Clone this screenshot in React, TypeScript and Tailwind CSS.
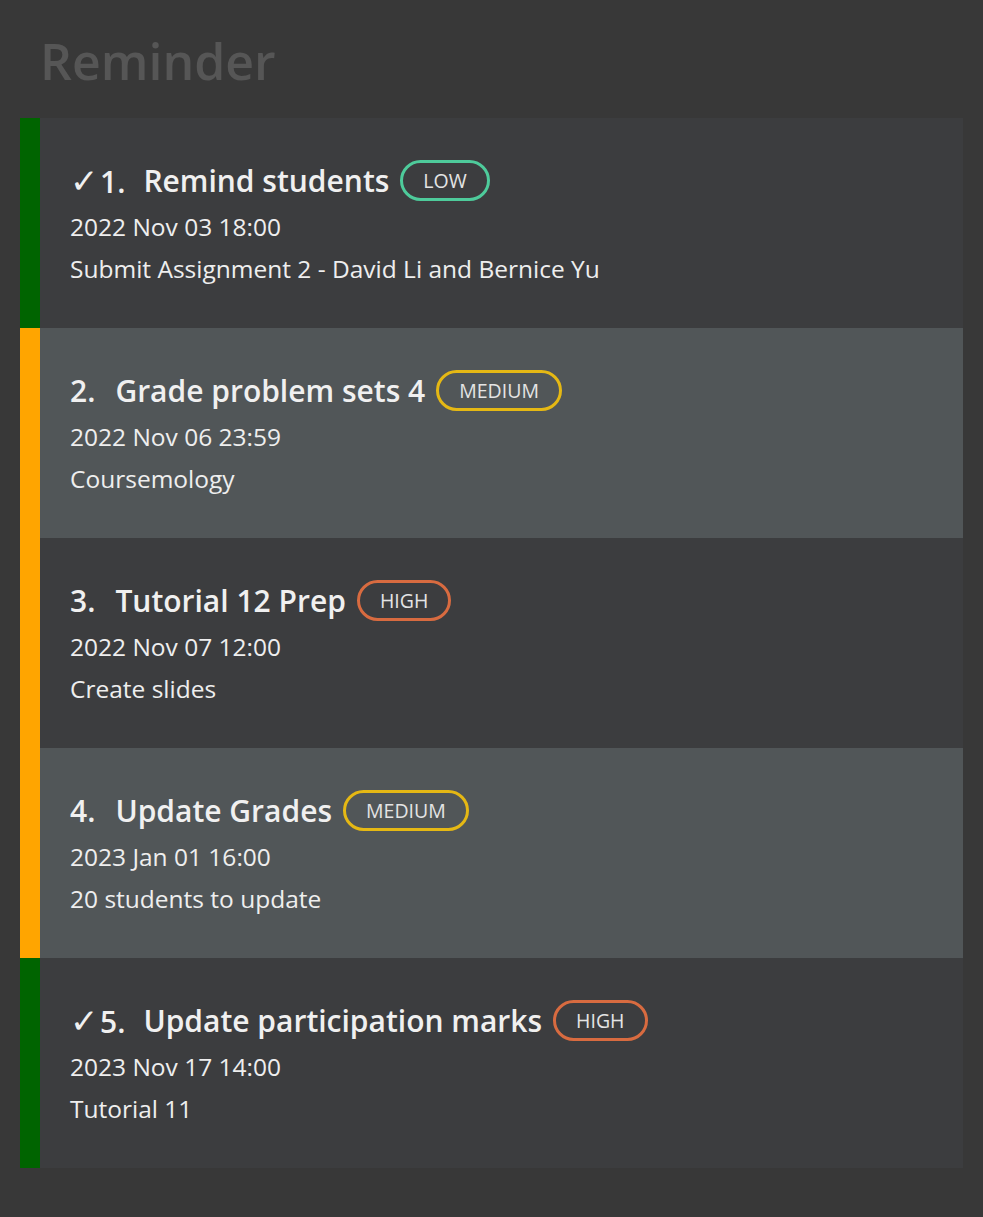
import React from "react";

type Priority = "LOW" | "MEDIUM" | "HIGH";

interface Reminder {
  id: number;
  title: string;
  deadline: string;
  description: string;
  priority: Priority;
  done: boolean;
}

const reminders: Reminder[] = [
  { id: 1, title: "Remind students", deadline: "2022 Nov 03 18:00", description: "Submit Assignment 2 - David Li and Bernice Yu", priority: "LOW", done: true },
  { id: 2, title: "Grade problem sets 4", deadline: "2022 Nov 06 23:59", description: "Coursemology", priority: "MEDIUM", done: false },
  { id: 3, title: "Tutorial 12 Prep", deadline: "2022 Nov 07 12:00", description: "Create slides", priority: "HIGH", done: false },
  { id: 4, title: "Update Grades", deadline: "2023 Jan 01 16:00", description: "20 students to update", priority: "MEDIUM", done: false },
  { id: 5, title: "Update participation marks", deadline: "2023 Nov 17 14:00", description: "Tutorial 11", priority: "HIGH", done: true },
];

const badgeClass: Record<Priority, string> = {
  LOW: "border-[#4ecb9b]",
  MEDIUM: "border-[#e5b814]",
  HIGH: "border-[#d86b40]",
};

const PriorityBadge = ({ priority }: { priority: Priority }) => (
  <span
    className={`ml-[11px] inline-flex h-[41px] items-center rounded-full border-[3px] px-[20px] text-[19.5px] font-normal text-[#e4e4e4] ${badgeClass[priority]}`}
  >
    {priority}
  </span>
);

const ReminderCard = ({ reminder, index }: { reminder: Reminder; index: number }) => (
  <div className={`flex h-[210px] ${index % 2 === 0 ? "bg-[#3c3d3f]" : "bg-[#515658]"}`}>
    <div className={`w-[20px] shrink-0 ${reminder.done ? "bg-[#006400]" : "bg-[#ffa500]"}`} />
    <div className="pl-[30px] pt-[42px]">
      <div className="flex h-[41px] items-center text-[30px] font-semibold text-[#f0f0f0]">
        <span>
          {reminder.done && <span className="mr-[2px] text-[34px] font-normal">✓</span>}
          {reminder.id}.
        </span>
        <span className={reminder.done ? "ml-[18px]" : "ml-[20px]"}>{reminder.title}</span>
        <PriorityBadge priority={reminder.priority} />
      </div>
      <p className="mt-[5px] text-[24.5px] leading-[42px] text-[#eeeeee]">{reminder.deadline}</p>
      <p className="text-[24.5px] leading-[42px] text-[#eeeeee]">{reminder.description}</p>
    </div>
  </div>
);

export default function App() {
  return (
    <div
      className="min-h-[1217px] bg-[#383838] px-[20px] pb-[49px]"
      style={{ fontFamily: '"Open Sans", "Noto Sans", sans-serif' }}
    >
      <h1 className="pl-[20px] pt-[22px] pb-[18px] text-[50px] leading-[78px] font-semibold text-[#565656]">
        Reminder
      </h1>
      <div className="flex flex-col">
        {reminders.map((r, i) => (
          <ReminderCard key={r.id} reminder={r} index={i} />
        ))}
      </div>
    </div>
  );
}
